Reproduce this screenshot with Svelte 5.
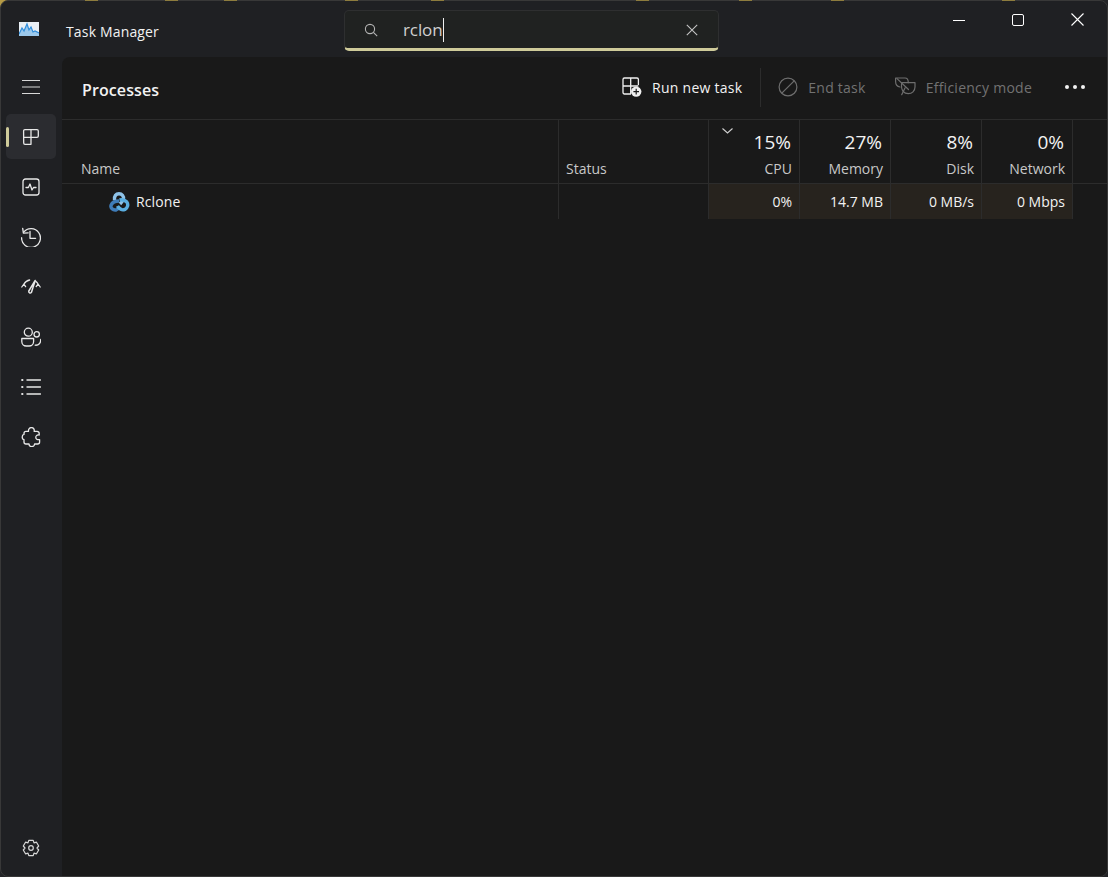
<script>
  const navItems = ["processes", "performance", "history", "startup", "users", "details", "services"];
  const metrics = [
    { pct: "15%", label: "CPU", value: "0%", sorted: true },
    { pct: "27%", label: "Memory", value: "14.7 MB" },
    { pct: "8%", label: "Disk", value: "0 MB/s" },
    { pct: "0%", label: "Network", value: "0 Mbps" },
  ];
  // bits of the wallpaper showing along the top edge of the window
  const edgeBits = [84, 164, 223, 344, 430, 635, 738, 830, 1001];
</script>

<div class="window">
  {#each edgeBits as x}
    <i class="edge-bit" style="left: {x}px"></i>
  {/each}
  <header class="titlebar">
    <svg class="app-icon" width="20" height="14" viewBox="0 0 20 14">
      <rect width="20" height="14" fill="#e8eef4" />
      <path d="M0 12 L3 6 L5 9 L8 2 L10 8 L12 5 L14 10 L16 9 L20 11 V14 H0Z" fill="#9cc9ec" />
      <path d="M0 12 L3 6 L5 9 L8 2 L10 8 L12 5 L14 10 L16 9 L20 11" fill="none" stroke="#2f8ddb" stroke-width="1.2" />
    </svg>
    <span class="app-name">Task Manager</span>
    <div class="search">
      <svg class="search-icon" width="14" height="14" viewBox="0 0 14 14" fill="none" stroke="#b5b5b5" stroke-width="1.1">
        <circle cx="6" cy="6" r="4.6" />
        <path d="M9.4 9.4 L13.2 13.2" />
      </svg>
      <span class="query">rclon</span><span class="caret"></span>
      <svg class="clear" width="12" height="12" viewBox="0 0 12 12" stroke="#c4c4c4" stroke-width="1.1">
        <path d="M0.8 0.8 L11.2 11.2 M11.2 0.8 L0.8 11.2" />
      </svg>
    </div>
    <div class="caption">
      <svg width="12" height="12" viewBox="0 0 12 12" stroke="#fff"><path d="M0 6.5 H12" /></svg>
      <svg width="12" height="12" viewBox="0 0 12 12" fill="none" stroke="#fff"><rect x="0.5" y="0.5" width="11" height="11" rx="1.5" /></svg>
      <svg width="13" height="13" viewBox="0 0 13 13" stroke="#fff" stroke-width="1.1"><path d="M0.5 0.5 L12.5 12.5 M12.5 0.5 L0.5 12.5" /></svg>
    </div>
  </header>

  <div class="body">
    <nav class="sidebar">
      <button class="nav-btn burger">
        <svg width="18" height="14" viewBox="0 0 18 14" stroke="#d8d8d8"><path d="M0 .5 H18 M0 7 H18 M0 13.5 H18" /></svg>
      </button>
      {#each navItems as item}
        <button class="nav-btn" class:active={item === "processes"}>
          <svg width="20" height="20" viewBox="0 0 20 20" fill="none" stroke="#e8e8e8" stroke-width="1.3" stroke-linecap="round" stroke-linejoin="round">
            {#if item === "processes"}
              <path d="M2.6 4 a1.3 1.3 0 0 1 1.3-1.3 H16 a1.3 1.3 0 0 1 1.3 1.3 V9 a1.3 1.3 0 0 1-1.3 1.3 H10 V17.3 H4 a1.3 1.3 0 0 1-1.3-1.3Z M10 2.7 V10.3 H2.7" />
            {:else if item === "performance"}
              <rect x="2" y="2" width="16" height="16" rx="2.5" />
              <path d="M5 10.5 H7.4 L9 7 L11 13 L12.5 10.5 H15" />
            {:else if item === "history"}
              <path d="M2.6 5.2 A9.4 9.4 0 1 1 0.6 10.7" />
              <path d="M1.7 1.4 L2.4 6.2 L7.2 5.8" />
              <path d="M9 4.4 V11.3 H14.6" />
            {:else if item === "startup"}
              <path d="M0.8 10 L2.9 7 L4.6 9.6 M2.9 7 Q5 3.6 8.6 3 M19.2 10 L17.1 7 L15.2 9.6 M17.1 7 Q16 5.2 14.8 4.4" />
              <path d="M14.2 3.4 L7.8 14 A1.5 1.5 0 0 0 10.4 15.4 Z" stroke-width="1.5" />
            {:else if item === "users"}
              <circle cx="7.3" cy="5.2" r="4" />
              <circle cx="15.7" cy="7.3" r="2.7" />
              <path d="M0.8 11.5 H12.6 V14.5 A4.5 4.5 0 0 1 8.1 19 H5.3 A4.5 4.5 0 0 1 0.8 14.5Z" />
              <path d="M14.2 18.2 C17.8 18.6 19.8 16 19.7 12.4" />
            {:else if item === "details"}
              <path d="M6 3 H19.5 M6 10 H19.5 M6 17 H19.5" stroke-width="1.4" />
              <path d="M1.2 3 H1.4 M1.2 10 H1.4 M1.2 17 H1.4" stroke-width="2.2" />
            {:else}
              <path d="M7.5 4.4 C7.2 1.6 9 .6 10.4 .6 C12 .6 13.6 1.8 13.2 4.4 L16 4.4 Q18.2 4.4 18.2 6.6 L18.2 8 C15.6 7.6 14.8 9.2 14.8 10.4 C14.8 11.8 16 13 18.6 12.6 L18.6 15 Q18.6 17 16.6 17 L13.6 17 C13.6 18.6 12 19.6 10.8 19.6 C9.4 19.6 8 18.6 8 17 L5 17 Q3 17 3 15 L3 12.6 C1.4 12.4 1.2 11 1.2 10 C1.2 8.8 1.8 7.6 3 7.4 L3 6.4 Q3 4.4 5 4.4 Z" />
            {/if}
          </svg>
        </button>
      {/each}
      <button class="nav-btn settings">
        <svg width="20" height="20" viewBox="0 0 20 20" fill="none" stroke="#d8d8d8" stroke-width="1.2" stroke-linejoin="round">
          <path d="M7.8 2.4 L12.2 2.4 L13 4.8 L15.5 4.2 L17.7 8 L16 10 L17.7 12 L15.5 15.8 L13 15.2 L12.2 17.6 L7.8 17.6 L7 15.2 L4.5 15.8 L2.3 12 L4 10 L2.3 8 L4.5 4.2 L7 4.8Z" />
          <circle cx="10" cy="10" r="2.3" />
        </svg>
      </button>
    </nav>

    <main class="panel">
      <div class="toolbar">
        <h1>Processes</h1>
        <button class="tool run">
          <svg width="20" height="20" viewBox="0 0 20 20" fill="none" stroke="#f0f0f0" stroke-width="1.3">
            <path d="M9 17 H2.4 A1.4 1.4 0 0 1 1 15.6 V2.4 A1.4 1.4 0 0 1 2.4 1 H15 A1.4 1.4 0 0 1 16.4 2.4 V8 M1 9 H16.4 M8.7 1 V17" />
            <circle cx="14.2" cy="14.6" r="5.2" fill="#f0f0f0" stroke="none" />
            <path d="M14.2 11.8 V17.4 M11.4 14.6 H17" stroke="#1a1a1a" stroke-width="1.2" />
          </svg>
          Run new task
        </button>
        <span class="divider"></span>
        <button class="tool off end">
          <svg width="20" height="20" viewBox="0 0 20 20" fill="none" stroke="#6e6e6e" stroke-width="1.2">
            <circle cx="10" cy="10" r="8.9" />
            <path d="M3.8 16.2 L16.2 3.8" />
          </svg>
          End task
        </button>
        <button class="tool off efficiency">
          <svg width="21" height="20" viewBox="0 0 21 20" fill="none" stroke="#6e6e6e" stroke-width="1.2" stroke-linejoin="round" stroke-linecap="round">
            <path d="M5 10 C2 9.5 0.6 7 0.6 4.5 V1 H10 C12.2 1 13.3 2.5 13.3 5.7" />
            <path d="M6.7 5.7 H20 V10 C20 14 17 16.7 13.3 16.7 C9.5 16.7 5.5 14 6.7 5.7 Z" />
            <path d="M2 1.6 L13.5 12.5 M10 11 L6.7 17.7" />
          </svg>
          Efficiency mode
        </button>
        <button class="tool more" aria-label="More">
          <span></span><span></span><span></span>
        </button>
      </div>

      <div class="table">
        <div class="row head">
          <div class="cell name">Name</div>
          <div class="cell status">Status</div>
          {#each metrics as m}
            <div class="cell metric">
              {#if m.sorted}
                <svg class="sort" width="11" height="6" viewBox="0 0 11 6" fill="none" stroke="#d0d0d0" stroke-width="1.1"><path d="M.5 .5 L5.5 5 L10.5 .5" /></svg>
              {/if}
              <span class="pct">{m.pct}</span>
              <span class="label">{m.label}</span>
            </div>
          {/each}
        </div>
        <div class="row item">
          <div class="cell name proc">
            <svg width="22" height="20" viewBox="0 0 22 20" fill="none" stroke-width="3.4">
              <path d="M11 9 C7 9 4 11 3.2 13 C2 16 5 18.5 8 18 C10 17.6 11 16 12 14.5" stroke="#3f7cb8" />
              <path d="M6.5 8 C6 4 8 1.8 11 1.8 C14 1.8 16 4 15.4 7 C15 9 13.5 10.5 12 12" stroke="#8ec2e8" />
              <path d="M11.5 8 C14 7.5 17 8 18.8 10 C20.6 12.4 19.6 16 17 17.4 C14 18.6 11 17 9.5 14" stroke="#5aaee0" />
            </svg>
            <span>Rclone</span>
          </div>
          <div class="cell status"></div>
          {#each metrics as m}
            <div class="cell metric value">{m.value}</div>
          {/each}
        </div>
      </div>
    </main>
  </div>
</div>

<style>
  :global(body) {
    margin: 0;
    background: linear-gradient(135deg, #b59a45 6px, #232427 6px);
  }

  .window {
    width: 1108px;
    height: 877px;
    display: flex;
    flex-direction: column;
    position: relative;
    background: #1f2023;
    color: #f2f2f2;
    font-family: "Open Sans", "Noto Sans", sans-serif;
    box-sizing: border-box;
    border: 1px solid #383838;
    border-radius: 8px;
  }

  .edge-bit {
    position: absolute;
    top: -1px;
    width: 13px;
    height: 1px;
    background: #8d7c3e;
  }

  button {
    background: none;
    border: none;
    padding: 0;
    color: inherit;
    font: inherit;
  }

  .titlebar {
    height: 56px;
    flex: none;
    display: flex;
    align-items: flex-start;
  }

  .app-icon {
    margin: 21px 0 0 18px;
  }

  .app-name {
    margin: 21px 0 0 27px;
    font-size: 14px;
    line-height: 20px;
    width: 278px;
    letter-spacing: 0.16px;
  }

  .search {
    margin-top: 9px;
    width: 375px;
    height: 41px;
    box-sizing: border-box;
    background: #202221;
    border: 1px solid #2e2f30;
    border-bottom: 3px solid #cfcb9a;
    border-radius: 5px;
    display: flex;
    align-items: center;
    padding-left: 19px;
    font-size: 17px;
    color: #d0d0d0;
  }

  .query {
    margin-left: 25px;
    letter-spacing: -0.1px;
  }

  .caret {
    width: 1px;
    height: 24px;
    background: #f0f0f0;
  }

  .clear {
    margin-left: auto;
    margin-right: 20px;
  }

  .caption {
    margin: 12px 0 0 234px;
    display: flex;
    align-items: center;
    gap: 47px;
  }

  .body {
    flex: 1;
    display: flex;
    min-height: 0;
  }

  .sidebar {
    width: 61px;
    flex: none;
    display: flex;
    flex-direction: column;
    align-items: flex-start;
    padding-left: 5px;
    box-sizing: border-box;
  }

  .nav-btn {
    width: 50px;
    height: 45px;
    margin-bottom: 5px;
    display: flex;
    align-items: center;
    justify-content: center;
    border-radius: 5px;
    position: relative;
  }

  .burger {
    height: 57px;
    padding-top: 2px;
    margin-bottom: 0;
  }

  .active {
    background: #2b2c30;
  }

  .active::before {
    content: "";
    position: absolute;
    left: 0;
    top: 13px;
    width: 3px;
    height: 20px;
    border-radius: 2px;
    background: #cfcb9a;
  }

  .settings {
    margin-top: auto;
    margin-bottom: 6px;
  }

  .panel {
    flex: 1;
    min-width: 0;
    background: #191919;
    border-top-left-radius: 8px;
    border-bottom-right-radius: 7px;
    display: flex;
    flex-direction: column;
  }

  .toolbar {
    height: 63px;
    flex: none;
    display: flex;
    align-items: center;
    box-sizing: border-box;
    border-bottom: 1px solid #2c2c2c;
    padding: 0 0 2px 20px;
    font-size: 14px;
  }

  h1 {
    margin: 0 auto 0 0;
    font-size: 16px;
    font-weight: 600;
    position: relative;
    top: 3px;
    letter-spacing: 0.1px;
  }

  .tool {
    display: flex;
    align-items: center;
    gap: 10px;
    letter-spacing: 0.25px;
  }

  .run {
    margin-right: 18px;
  }

  .divider {
    width: 1px;
    height: 39px;
    background: #2c2c2c;
  }

  .end {
    margin-left: 17px;
  }

  .efficiency {
    margin-left: 29px;
  }

  .off {
    color: #727272;
  }

  .more {
    margin: 0 22px 0 33px;
    gap: 4px;
  }

  .more span {
    width: 4px;
    height: 4px;
    border-radius: 50%;
    background: #f2f2f2;
  }

  .table {
    display: flex;
    flex-direction: column;
  }

  .row {
    display: flex;
  }

  .head {
    height: 64px;
    box-sizing: border-box;
    border-bottom: 1px solid #2c2c2c;
  }

  .item {
    height: 35px;
  }

  .cell {
    box-sizing: border-box;
    font-size: 14px;
  }

  .name {
    width: 497px;
    border-right: 1px solid #2c2c2c;
    padding-left: 19px;
    color: #c8c8c8;
    display: flex;
    align-items: flex-end;
    padding-bottom: 5px;
  }

  .status {
    width: 150px;
    border-right: 1px solid #2c2c2c;
    padding-left: 7px;
    color: #c8c8c8;
    display: flex;
    align-items: flex-end;
    padding-bottom: 5px;
  }

  .metric {
    width: 91px;
    border-right: 1px solid #2c2c2c;
    display: flex;
    flex-direction: column;
    align-items: flex-end;
    padding-right: 7px;
    position: relative;
  }

  .sort {
    position: absolute;
    left: 13px;
    top: 8px;
  }

  .pct {
    font-size: 19px;
    line-height: 26px;
    margin-top: 9px;
    margin-right: 1px;
  }

  .label {
    color: #c8c8c8;
    line-height: 20px;
    margin-top: 4px;
  }

  .proc {
    align-items: center;
    padding: 0 0 0 46px;
    color: #f2f2f2;
    gap: 6px;
    letter-spacing: 0.1px;
  }

  .value {
    background: #27231e;
    justify-content: center;
    color: #f2f2f2;
  }
</style>
